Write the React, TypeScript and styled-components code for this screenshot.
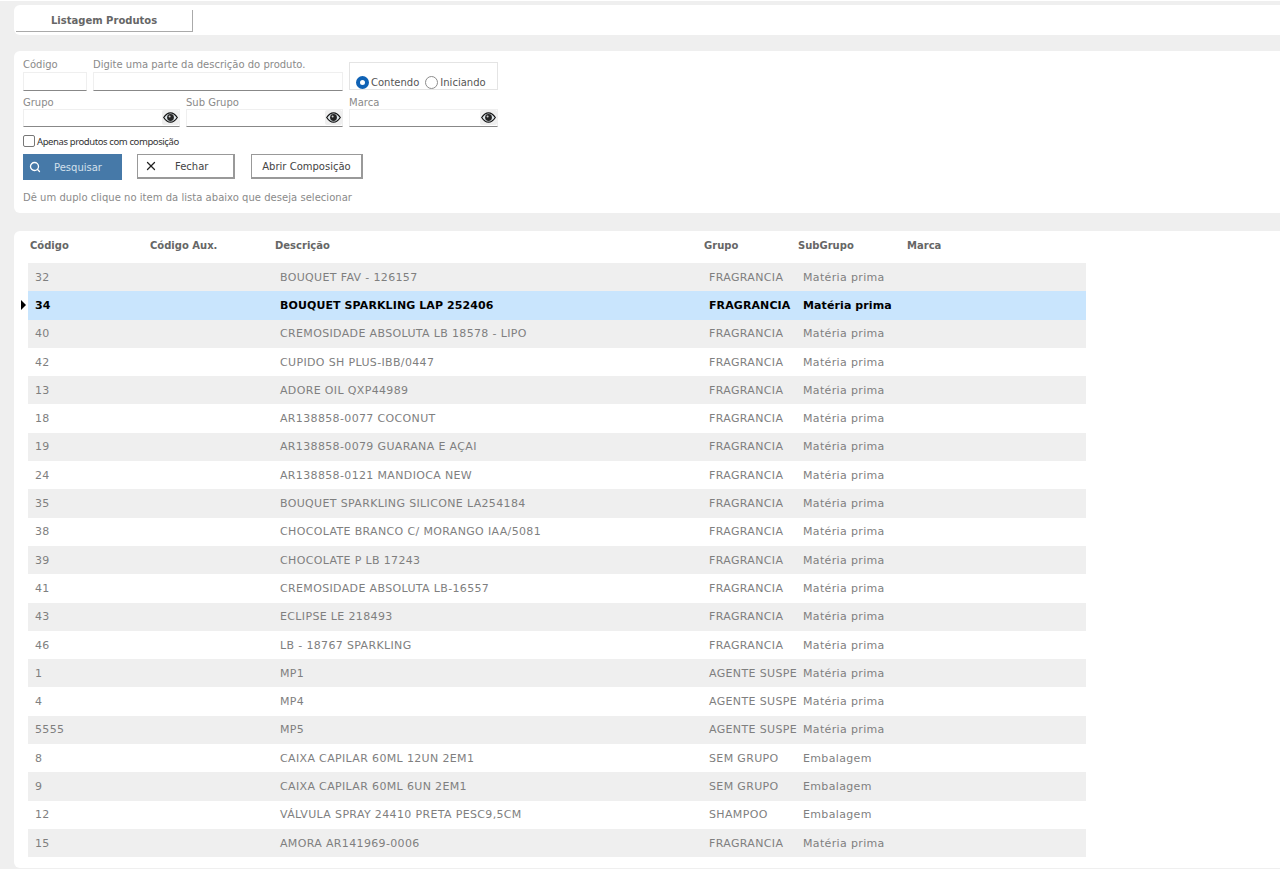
import React from "react";
import styled, { createGlobalStyle } from "styled-components";
import { Search, X } from "lucide-react";

const GlobalStyle = createGlobalStyle`
  html, body {
    margin: 0;
    padding: 0;
    height: 869px;
    overflow: hidden;
    background: #fff;
  }
  * { box-sizing: border-box; }
`;

const Page = styled.div`
  height: 868px;
  margin-top: 1px;
  padding: 4px 0 0 14px;
  background: #efefef;
  font-family: "DejaVu Sans", Verdana, sans-serif;
  font-size: 11px;
  color: #7f7f7f;
`;

const TabPanel = styled.div`
  height: 30px;
  padding: 5px 0 0 2px;
  background: #fff;
  border-radius: 6px 0 0 6px;
`;

const Tab = styled.div`
  width: 177px;
  height: 22px;
  display: flex;
  align-items: center;
  padding-left: 35px;
  border-right: 1px solid #aaa;
  border-bottom: 1px solid #aaa;
  font-size: 10px;
  font-weight: bold;
  color: #666;
`;

const FormPanel = styled.div`
  height: 162px;
  margin-top: 16px;
  padding: 7px 0 0 9px;
  background: #fff;
  border-radius: 6px 0 0 6px;
`;

const FieldRow = styled.div<{ $h: number }>`
  display: flex;
  gap: 6px;
  height: ${(p) => p.$h}px;
`;

const Field = styled.div<{ $w: number }>`
  width: ${(p) => p.$w}px;
  display: flex;
  flex-direction: column;
  position: relative;
`;

const Label = styled.label<{ $h: number }>`
  height: ${(p) => p.$h}px;
  font-size: 10px;
  line-height: 13px;
  color: #8a8a8a;
`;

const TextInput = styled.input<{ $h: number }>`
  width: 100%;
  height: ${(p) => p.$h}px;
  padding: 0 2px;
  border: 1px solid #efefef;
  border-bottom: 1px solid #888;
  background: #fff;
  outline: none;
`;

const OptionBox = styled.div`
  width: 149px;
  height: 28px;
  margin-top: 4px;
  padding: 12px 0 0 6px;
  display: flex;
  align-items: center;
  border: 1px solid #e4e4e4;
  font-size: 10px;
  color: #555;
`;

const Radio = styled.span<{ $on?: boolean }>`
  width: 13px;
  height: 13px;
  margin-right: 2px;
  border-radius: 50%;
  background: #fff;
  border: ${(p) => (p.$on ? "4px solid #0f62b5" : "1px solid #8c8c8c")};
`;

const OptionText = styled.span`
  margin-right: 6px;
`;

const EyeButton = styled.span`
  position: absolute;
  right: 1px;
  bottom: 2px;
  width: 17px;
  height: 15px;
  display: flex;
  align-items: center;
  justify-content: center;
  background: #efefef;
  border-radius: 2px;
`;

const CheckRow = styled.div`
  height: 12px;
  margin-top: 8px;
  display: flex;
  align-items: center;
  gap: 2px;
  font-family: "Noto Sans", sans-serif;
  font-size: 9.5px;
  letter-spacing: -0.4px;
  color: #333;
`;

const CheckBox = styled.span`
  width: 12px;
  height: 12px;
  border: 1px solid #777;
  border-radius: 2px;
  background: #fff;
`;

const Buttons = styled.div`
  display: flex;
  height: 26px;
  margin-top: 7px;
`;

const PrimaryButton = styled.button`
  width: 99px;
  height: 26px;
  margin-right: 15px;
  padding: 0 0 0 6px;
  display: flex;
  align-items: center;
  gap: 13px;
  border: 0;
  background: #4679a8;
  color: #d3e0ec;
  font: inherit;
  font-size: 10px;
`;

const OutlineButton = styled.button<{ $w: number; $gap?: number }>`
  width: ${(p) => p.$w}px;
  height: 25px;
  margin-right: 16px;
  display: flex;
  align-items: center;
  justify-content: ${(p) => (p.$gap ? "flex-start" : "center")};
  gap: ${(p) => p.$gap || 0}px;
  padding: 0 0 0 ${(p) => (p.$gap ? 6 : 0)}px;
  border: 1px solid #999;
  border-width: 1px 2px 2px 1px;
  background: #fff;
  color: #444;
  font: inherit;
  font-size: 10px;
`;

const Hint = styled.div`
  margin-top: 11px;
  font-size: 10px;
  line-height: 14px;
  letter-spacing: 0.03px;
  color: #8a8a8a;
`;

const ListPanel = styled.div`
  height: 637px;
  margin-top: 18px;
  background: #fff;
  border-radius: 6px 0 0 6px;
`;

const Grid = styled.div`
  width: 1058px;
  margin-left: 14px;
`;

const columns = "120px 125px 429px 94px 109px 181px";

const HeaderRow = styled.div`
  display: grid;
  grid-template-columns: ${columns};
  height: 32px;
  padding-bottom: 4px;
  align-items: center;
`;

const HeaderCell = styled.div`
  padding-left: 2px;
  font-size: 10px;
  font-weight: bold;
  color: #666;
`;

const Row = styled.div<{ $odd: boolean; $selected: boolean }>`
  position: relative;
  display: grid;
  grid-template-columns: ${columns};
  height: 28.3px;
  align-items: center;
  background: ${(p) => (p.$selected ? "#c9e5fd" : p.$odd ? "#efefef" : "#fff")};
  color: ${(p) => (p.$selected ? "#000" : "#7f7f7f")};
  font-weight: ${(p) => (p.$selected ? "bold" : "normal")};
  letter-spacing: ${(p) => (p.$selected ? "0.1px" : "0.35px")};
`;

const Cell = styled.div`
  padding-left: 7px;
  white-space: nowrap;
`;

const RowMarker = styled.span`
  position: absolute;
  left: -7px;
  top: 9px;
  border-left: 5px solid #000;
  border-top: 5px solid transparent;
  border-bottom: 5px solid transparent;
`;

const Eye = () => (
  <EyeButton>
    <svg width="15" height="11" viewBox="0 0 15 11">
      <path d="M0.7 5.5C3 2 5 0.8 7.5 0.8S12 2 14.3 5.5C12 9 10 10.2 7.5 10.2S3 9 0.7 5.5Z" fill="#dfe6ea" stroke="#111" strokeWidth="1.2" />
      <circle cx="7.5" cy="5.5" r="3.4" fill="#222" />
      <circle cx="6.6" cy="4.6" r="1" fill="#ccc" />
    </svg>
  </EyeButton>
);

const FRAG = "FRAGRANCIA";
const MP = "Matéria prima";
const AG = "AGENTE SUSPE";

const products = [
  ["32", "BOUQUET FAV - 126157", FRAG, MP],
  ["34", "BOUQUET SPARKLING LAP 252406", FRAG, MP],
  ["40", "CREMOSIDADE ABSOLUTA LB 18578 - LIPO", FRAG, MP],
  ["42", "CUPIDO SH PLUS-IBB/0447", FRAG, MP],
  ["13", "ADORE OIL QXP44989", FRAG, MP],
  ["18", "AR138858-0077 COCONUT", FRAG, MP],
  ["19", "AR138858-0079 GUARANA E AÇAI", FRAG, MP],
  ["24", "AR138858-0121 MANDIOCA NEW", FRAG, MP],
  ["35", "BOUQUET SPARKLING SILICONE LA254184", FRAG, MP],
  ["38", "CHOCOLATE BRANCO C/ MORANGO IAA/5081", FRAG, MP],
  ["39", "CHOCOLATE P LB 17243", FRAG, MP],
  ["41", "CREMOSIDADE ABSOLUTA LB-16557", FRAG, MP],
  ["43", "ECLIPSE LE 218493", FRAG, MP],
  ["46", "LB - 18767 SPARKLING", FRAG, MP],
  ["1", "MP1", AG, MP],
  ["4", "MP4", AG, MP],
  ["5555", "MP5", AG, MP],
  ["8", "CAIXA CAPILAR 60ML 12UN 2EM1", "SEM GRUPO", "Embalagem"],
  ["9", "CAIXA CAPILAR 60ML 6UN 2EM1", "SEM GRUPO", "Embalagem"],
  ["12", "VÁLVULA SPRAY 24410 PRETA PESC9,5CM", "SHAMPOO", "Embalagem"],
  ["15", "AMORA AR141969-0006", FRAG, MP],
];

export default function App() {
  return (
    <Page>
      <GlobalStyle />
      <TabPanel>
        <Tab>Listagem Produtos</Tab>
      </TabPanel>

      <FormPanel>
        <FieldRow $h={38}>
          <Field $w={64}>
            <Label $h={14}>Código</Label>
            <TextInput $h={19} />
          </Field>
          <Field $w={250}>
            <Label $h={14}>Digite uma parte da descrição do produto.</Label>
            <TextInput $h={19} />
          </Field>
          <OptionBox>
            <Radio $on />
            <OptionText>Contendo</OptionText>
            <Radio />
            <OptionText>Iniciando</OptionText>
          </OptionBox>
        </FieldRow>
        <FieldRow $h={31}>
          <Field $w={157}>
            <Label $h={13}>Grupo</Label>
            <TextInput $h={18} />
            <Eye />
          </Field>
          <Field $w={157}>
            <Label $h={13}>Sub Grupo</Label>
            <TextInput $h={18} />
            <Eye />
          </Field>
          <Field $w={149}>
            <Label $h={13}>Marca</Label>
            <TextInput $h={18} />
            <Eye />
          </Field>
        </FieldRow>
        <CheckRow>
          <CheckBox />
          Apenas produtos com composição
        </CheckRow>
        <Buttons>
          <PrimaryButton>
            <Search size={12} strokeWidth={2.6} color="#fff" />
            Pesquisar
          </PrimaryButton>
          <OutlineButton $w={98} $gap={17}>
            <X size={14} strokeWidth={2.2} color="#222" />
            Fechar
          </OutlineButton>
          <OutlineButton $w={112}>Abrir Composição</OutlineButton>
        </Buttons>
        <Hint>Dê um duplo clique no item da lista abaixo que deseja selecionar</Hint>
      </FormPanel>

      <ListPanel>
        <Grid>
          <HeaderRow>
            <HeaderCell>Código</HeaderCell>
            <HeaderCell>Código Aux.</HeaderCell>
            <HeaderCell>Descrição</HeaderCell>
            <HeaderCell>Grupo</HeaderCell>
            <HeaderCell>SubGrupo</HeaderCell>
            <HeaderCell>Marca</HeaderCell>
          </HeaderRow>
          {products.map(([code, desc, group, sub], i) => (
            <Row key={code} $odd={i % 2 === 0} $selected={i === 1}>
              {i === 1 && <RowMarker />}
              <Cell>{code}</Cell>
              <Cell />
              <Cell>{desc}</Cell>
              <Cell>{group}</Cell>
              <Cell>{sub}</Cell>
              <Cell />
            </Row>
          ))}
        </Grid>
      </ListPanel>
    </Page>
  );
}
